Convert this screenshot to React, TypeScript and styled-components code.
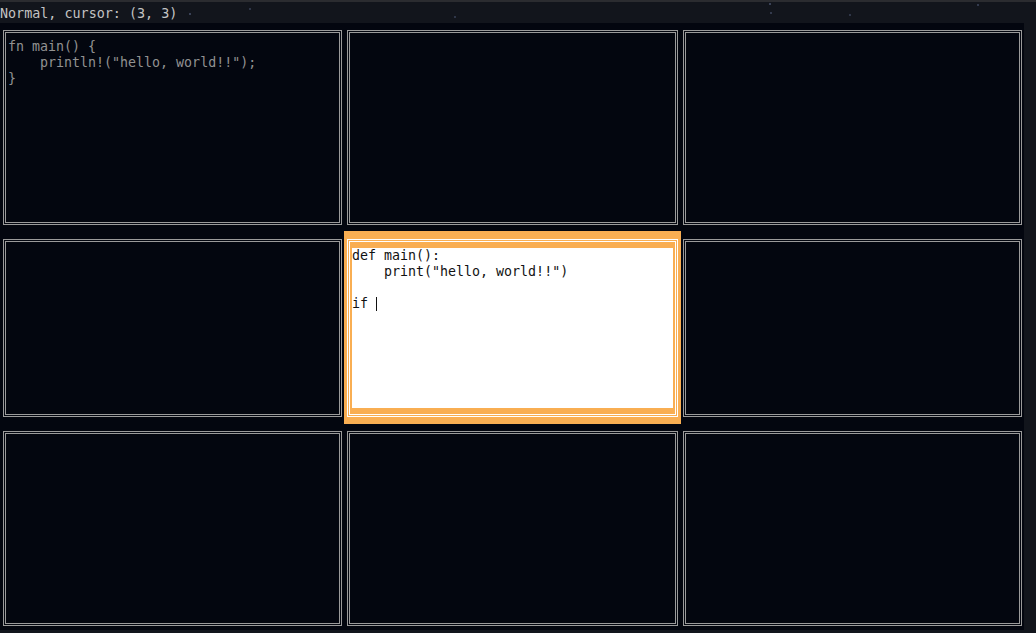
import React from 'react';
import styled, { createGlobalStyle, css } from 'styled-components';

const GlobalStyle = createGlobalStyle`
    html, body {
        margin: 0;
        padding: 0;
        width: 1036px;
        height: 633px;
        overflow: hidden;
    }
    body {
        background-color: #12151c;
        background-image:
            radial-gradient(circle at 190px 14px, #3a4257 0.8px, transparent 1.4px),
            radial-gradient(circle at 250px 9px, #2f3648 0.8px, transparent 1.4px),
            radial-gradient(circle at 455px 17px, #2f3648 0.8px, transparent 1.4px),
            radial-gradient(circle at 770px 4px, #3a4257 0.9px, transparent 1.5px),
            radial-gradient(circle at 771px 13px, #333a4d 0.8px, transparent 1.4px),
            radial-gradient(circle at 850px 15px, #2f3648 0.8px, transparent 1.4px),
            radial-gradient(circle at 978px 5px, #333a4d 0.8px, transparent 1.4px);
        font-family: "DejaVu Sans Mono", "Liberation Mono", monospace;
    }
`;

const Screen = styled.div`
    display: flex;
    flex-direction: column;
    width: 1036px;
    height: 633px;
    border-top: 2px solid #2b2c30;
    box-sizing: border-box;
`;

const StatusBar = styled.div`
    height: 21px;
    display: flex;
    align-items: flex-end;
    padding-bottom: 1px;
    box-sizing: border-box;
    color: #c4c4c4;
    font-size: 13.4px;
    line-height: 16px;
    white-space: pre;
`;

const Panel = styled.div`
    width: 1024px;
    height: 607px;
    box-sizing: border-box;
    padding: 7px 2px 5px 3px;
    background: #03060f;
    display: grid;
    grid-template-columns: 339px 331px 339px;
    grid-template-rows: 195px 178px 195px;
    column-gap: 5px;
    row-gap: 14px;
`;

const Cell = styled.div<{ $focused?: boolean }>`
    box-sizing: border-box;
    border: 3px double #9a9a9a;
    padding: 6px 2px;
    display: flex;
    ${p => p.$focused && css`
        border-color: #ffffff;
        background: #f9ae52;
        box-shadow: 0 -5px 0 3px #f9ae52, 0 4px 0 3px #f9ae52;
    `}
`;

const Editor = styled.div<{ $focused?: boolean }>`
    flex: 1;
    margin: 0;
    font-size: 13.3px;
    line-height: 16px;
    white-space: pre;
    overflow: hidden;
    color: ${p => (p.$focused ? '#111111' : '#929292')};
    background: ${p => (p.$focused ? '#ffffff' : 'transparent')};
`;

const Caret = styled.span`
    display: inline-block;
    width: 1px;
    height: 14px;
    background: #111111;
    vertical-align: -3px;
`;

const buffers: { text: string; focused?: boolean }[] = [
    { text: 'fn main() {\n    println!("hello, world!!");\n}' },
    { text: '' },
    { text: '' },
    { text: '' },
    { text: 'def main():\n    print("hello, world!!")\n\nif ', focused: true },
    { text: '' },
    { text: '' },
    { text: '' },
    { text: '' },
];

export default function App() {
    return (
        <>
            <GlobalStyle />
            <Screen>
                <StatusBar>Normal, cursor: (3, 3)</StatusBar>
                <Panel>
                    {buffers.map((b, i) => (
                        <Cell key={i} $focused={b.focused}>
                            <Editor $focused={b.focused}>
                                {b.text}
                                {b.focused && <Caret />}
                            </Editor>
                        </Cell>
                    ))}
                </Panel>
            </Screen>
        </>
    );
}
